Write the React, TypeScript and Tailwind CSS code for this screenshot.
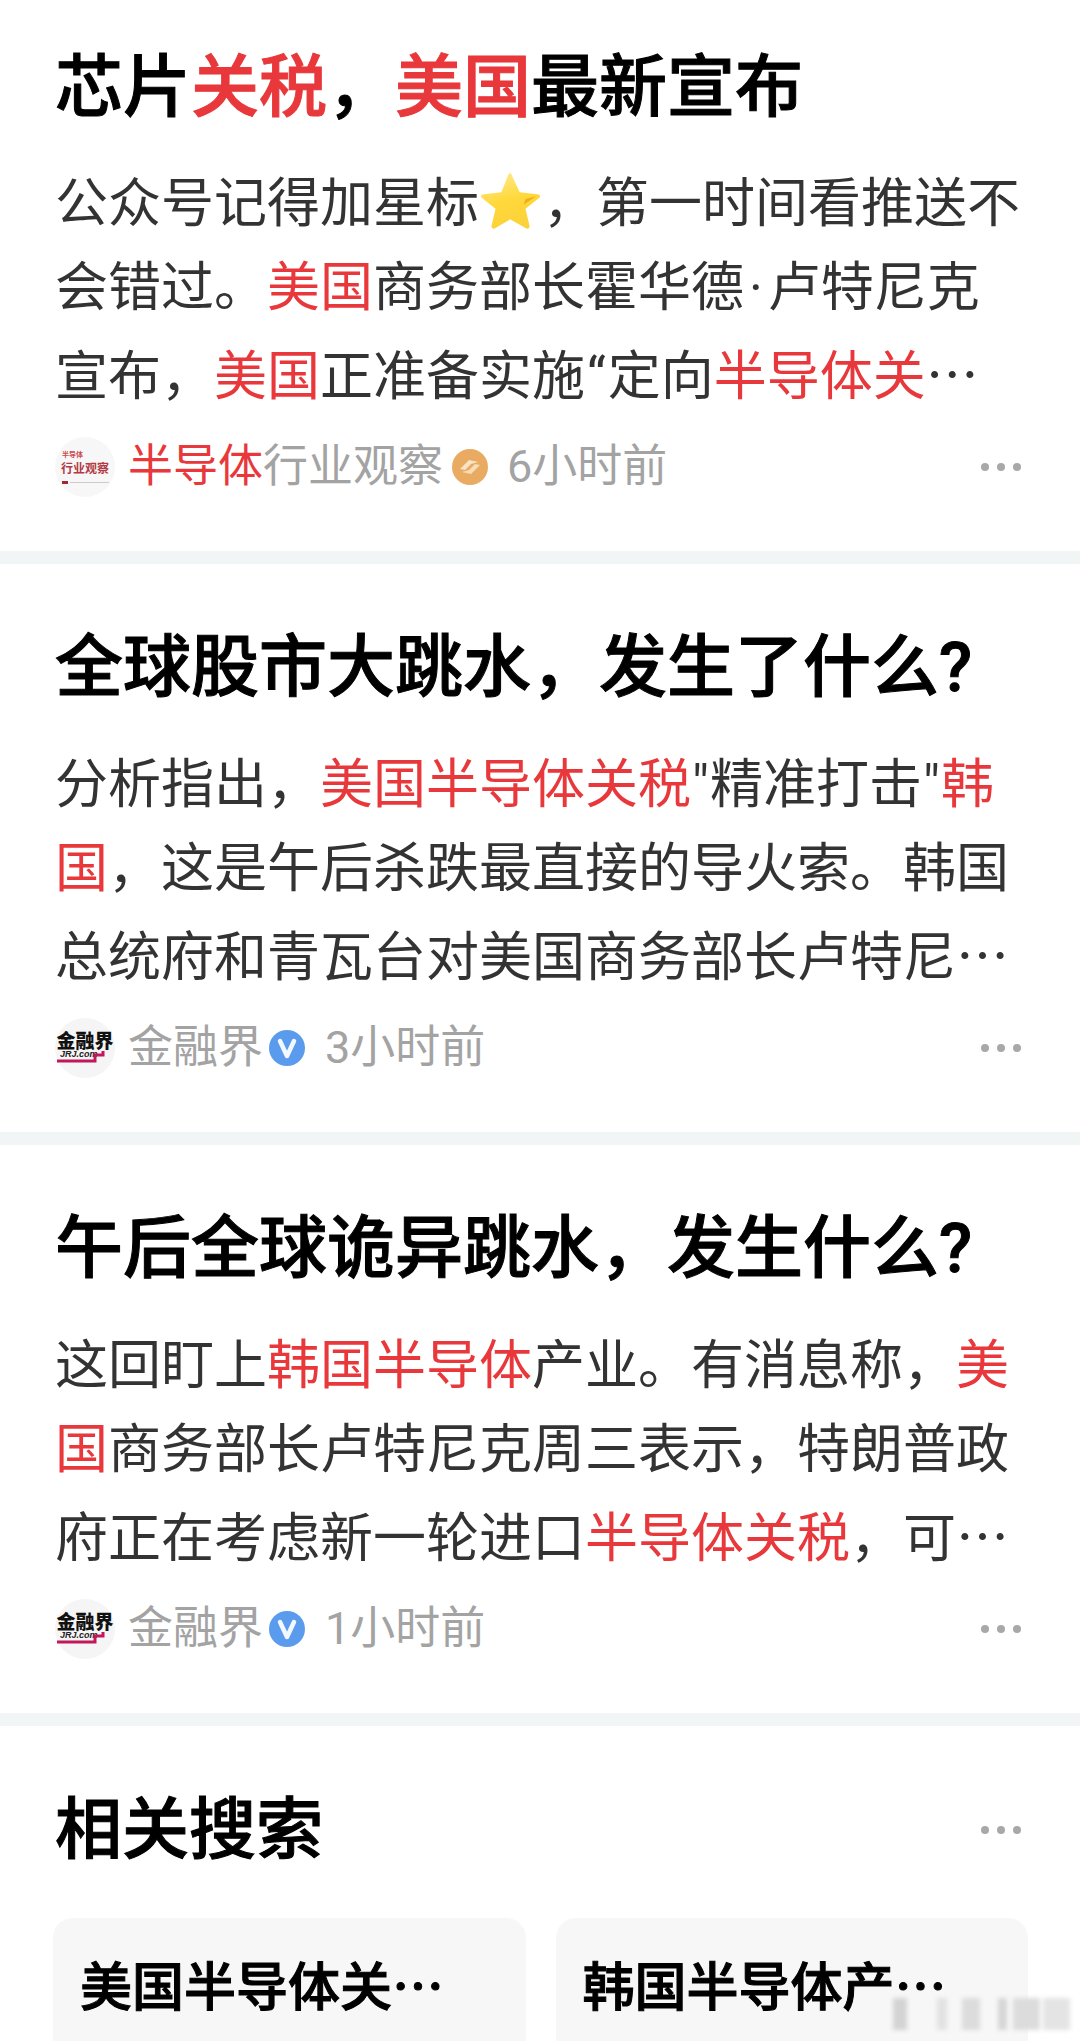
import React from "react";

const R: React.FC<{ children: React.ReactNode }> = ({ children }) => (
  <span className="text-[#e8383b]">{children}</span>
);

const Ell = () => <span className="font-['Noto_Sans_CJK_SC']">…</span>;

const Star = () => (
  <svg viewBox="0 0 64 60" className="inline-block w-[64px] h-[58px] align-[-8px]">
    <defs>
      <linearGradient id="star" x1="0.3" y1="0" x2="0.6" y2="1">
        <stop offset="0" stopColor="#ffe98a" />
        <stop offset="0.5" stopColor="#ffd83a" />
        <stop offset="1" stopColor="#fbd23a" />
      </linearGradient>
    </defs>
    <path
      d="M31 1 C32 1 33 3 34 6 L41 21 L59 23 C62 23 63 25 61 27 L47 38 L51 55 C52 58 49 60 47 58 L31 49 L16 58 C14 60 11 58 12 55 L16 38 L2 27 C0 25 1 23 4 23 L22 21 L28 6 C29 3 30 1 31 1 Z"
      fill="url(#star)"
    />
    <path d="M45 34 L58 25 L47 28 Z" fill="#f2ad1c" />
  </svg>
);

const Dots = () => (
  <div className="flex gap-[8px]">
    <span className="w-[8px] h-[8px] rounded-full bg-[#a8a8a8]" />
    <span className="w-[8px] h-[8px] rounded-full bg-[#a8a8a8]" />
    <span className="w-[8px] h-[8px] rounded-full bg-[#a8a8a8]" />
  </div>
);

const AvatarSemi = () => (
  <div className="w-[60px] h-[60px] rounded-full bg-[#f8f7f7] flex flex-col items-center justify-center shrink-0 leading-none">
    <div className="w-[48px] text-[7px] font-bold text-[#c8484e] leading-[9px] pl-[1px]">半导体</div>
    <div className="text-[12px] font-bold text-[#b23a44] leading-[15px] whitespace-nowrap mt-[2px]">行业观察</div>
    <div className="w-[47px] flex items-center gap-[2px] mt-[4px]">
      <span className="w-[6px] h-[3px] bg-[#a02a34]" />
      <span className="flex-1 h-[1px] bg-[#cfc9ca]" />
    </div>
  </div>
);

const AvatarJrj = () => (
  <div className="w-[60px] h-[60px] rounded-full bg-[#f6f5f5] flex flex-col items-center justify-center shrink-0 leading-none">
    <div className="text-[19px] font-black text-[#111] leading-[17px] whitespace-nowrap">金融界</div>
    <div className="relative w-[56px] h-[13px]">
      <span className="absolute left-[3px] top-[0px] text-[9px] font-bold italic text-[#222] leading-[9px] font-['Liberation_Sans']">
        JRJ.com
      </span>
      <svg viewBox="0 0 56 13" className="absolute inset-0 w-[56px] h-[13px]">
        <path d="M0 11 H38 V5 H46 V1" fill="none" stroke="#c2185b" strokeWidth="3" />
      </svg>
    </div>
  </div>
);

const BadgeGold = () => (
  <svg viewBox="0 0 36 36" className="w-[36px] h-[36px] shrink-0 ml-[3px] mr-[-1px]">
    <circle cx="18" cy="18" r="18" fill="#e9ab62" />
    <path d="M8 20 L17 11 L26 13 L19 15 L13 21 Z" fill="#f9e4c6" />
    <path d="M28 16 L19 25 L10 23 L17 21 L23 15 Z" fill="#f7dcb8" />
  </svg>
);

const BadgeV = () => (
  <svg viewBox="0 0 36 36" className="w-[36px] h-[36px] shrink-0">
    <circle cx="18" cy="18" r="18" fill="#5b9bee" />
    <path d="M11 11 L18 26 L25 11" fill="none" stroke="#f2f8ff" strokeWidth="4.5" strokeLinejoin="round" strokeLinecap="round" />
  </svg>
);

interface FeedItemProps {
  title: React.ReactNode;
  lines: React.ReactNode[];
  avatar: React.ReactNode;
  source: React.ReactNode;
  badge: React.ReactNode;
  time: string;
  first?: boolean;
}

const FeedItem: React.FC<FeedItemProps> = ({ title, lines, avatar, source, badge, time, first }) => (
  <section className={`px-[55px] ${first ? "pt-[46px] pb-[54px]" : "pt-[62px] pb-[54px]"}`}>
    <h2 className="text-[68px] leading-[84px] font-medium [-webkit-text-stroke:1px_currentColor] text-black whitespace-nowrap">
      {title}
    </h2>
    <div className={`${first ? "mt-[32px]" : "mt-[33px]"} text-[53px] leading-[84px] text-[#333333]`}>
      {lines.map((line, i) => (
        <div key={i} className="whitespace-nowrap h-[84px]">
          {line}
        </div>
      ))}
    </div>
    <div className="mt-[23px] h-[60px] flex items-center pr-[4px]">
      {avatar}
      <div className="ml-[13px] text-[45px] leading-[60px] text-[#a3a3a3] whitespace-nowrap">{source}</div>
      <div className="ml-[6px]">{badge}</div>
      <div className="ml-[20px] text-[45px] leading-[60px] text-[#a3a3a3] whitespace-nowrap">{time}</div>
      <div className="ml-auto">
        <Dots />
      </div>
    </div>
  </section>
);

const Divider = () => <div className="h-[13px] bg-[#f2f5f5]" />;

export default function App() {
  return (
    <div className="relative w-[1080px] h-[2041px] overflow-hidden bg-white font-['Roboto','Noto_Sans_CJK_SC',sans-serif]">
      <FeedItem
        first
        title={
          <>
            芯片<R>关税</R>，<R>美国</R>最新宣布
          </>
        }
        lines={[
          <>
            公众号记得加星标
            <Star />
            ，第一时间看推送不
          </>,
          <>
            会错过。<R>美国</R>商务部长霍华德<span className="mx-[5px]">·</span>卢特尼克
          </>,
          <>
            宣布，<R>美国</R>正准备实施<span className="mx-[2px]">“</span>定向<R>半导体关</R>
            <Ell />
          </>,
        ]}
        avatar={<AvatarSemi />}
        source={
          <>
            <R>半导体</R>行业观察
          </>
        }
        badge={<BadgeGold />}
        time="6小时前"
      />
      <Divider />
      <FeedItem
        title="全球股市大跳水，发生了什么?"
        lines={[
          <>
            分析指出，<R>美国半导体关税</R>
            <span className="mx-[1px]">"</span>精准打击<span className="mx-[1px]">"</span>
            <R>韩</R>
          </>,
          <>
            <R>国</R>，这是午后杀跌最直接的导火索。韩国
          </>,
          <>
            总统府和青瓦台对美国商务部长卢特尼
            <Ell />
          </>,
        ]}
        avatar={<AvatarJrj />}
        source="金融界"
        badge={<BadgeV />}
        time="3小时前"
      />
      <Divider />
      <FeedItem
        title="午后全球诡异跳水，发生什么?"
        lines={[
          <>
            这回盯上<R>韩国半导体</R>产业。有消息称，<R>美</R>
          </>,
          <>
            <R>国</R>商务部长卢特尼克周三表示，特朗普政
          </>,
          <>
            府正在考虑新一轮进口<R>半导体关税</R>，可
            <Ell />
          </>,
        ]}
        avatar={<AvatarJrj />}
        source="金融界"
        badge={<BadgeV />}
        time="1小时前"
      />
      <Divider />
      <section className="pt-[62px] px-[55px]">
        <div className="flex items-center justify-between pr-[4px]">
          <h2 className="text-[67px] leading-[84px] font-medium [-webkit-text-stroke:1px_currentColor] text-black">相关搜索</h2>
          <Dots />
        </div>
        <div className="mt-[46px] ml-[-2px] grid grid-cols-2 gap-[30px] w-[975px]">
          <div className="h-[200px] rounded-t-[20px] bg-[#f7f7f7] pl-[27px] pt-[33px] text-[52px] leading-[66px] font-medium [-webkit-text-stroke:1px_currentColor] text-black whitespace-nowrap">
            美国半导体关
            <Ell />
          </div>
          <div className="h-[200px] rounded-t-[20px] bg-[#f7f7f7] pl-[27px] pt-[33px] text-[52px] leading-[66px] font-medium [-webkit-text-stroke:1px_currentColor] text-black whitespace-nowrap">
            韩国半导体产
            <Ell />
          </div>
        </div>
      </section>
      {/* blurred watermark in the corner */}
      <div className="absolute left-[893px] top-[1998px] h-[32px] w-[177px] flex blur-[2px]">
        <span className="w-[14px] bg-[#d4d4d4]" />
        <span className="ml-[30px] w-[10px] bg-[#e2e2e2]" />
        <span className="ml-[15px] w-[18px] bg-[#dcdcdc]" />
        <span className="ml-[18px] w-[9px] bg-[#d6d6d6]" />
        <span className="ml-[6px] w-[27px] bg-[#dcdcdc]" />
        <span className="ml-[3px] w-[27px] bg-[#e4e4e4]" />
      </div>
    </div>
  );
}
